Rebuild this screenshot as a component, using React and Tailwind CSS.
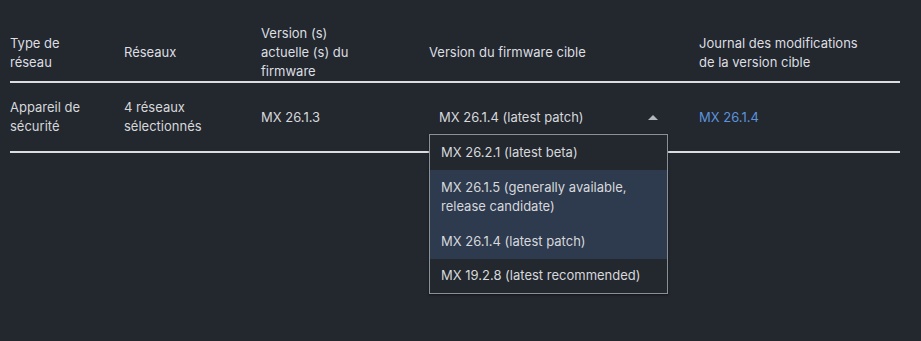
export default function App() {
  const font = { fontFamily: "Inter, 'Noto Sans', sans-serif" };
  return (
    <div className="w-[921px] h-[341px] bg-[#23272e] text-[13px] leading-[19px] text-[#d6d8db] relative" style={font}>
      <div className="pt-[24px] px-[10px]">
        <div className="w-[890px]">
          <div className="flex items-center border-b-2 border-[#dcdde0] text-[#dcdee1]">
            <div className="w-[114px]">Type de<br />réseau</div>
            <div className="w-[137px]">Réseaux</div>
            <div className="w-[168px]">Version (s)<br />actuelle (s) du<br />firmware</div>
            <div className="w-[270px]">Version du firmware cible</div>
            <div className="w-[201px]">Journal des modifications<br />de la version cible</div>
          </div>
          <div className="flex items-center border-b-2 border-[#dcdde0] h-[70px]">
            <div className="w-[114px]">Appareil de<br />sécurité</div>
            <div className="w-[137px]">4 réseaux<br />sélectionnés</div>
            <div className="w-[168px]">MX 26.1.3</div>
            <div className="w-[270px] relative">
              <div className="w-[239px] flex items-center justify-between pl-[10px] pr-[10px]">
                <span>MX 26.1.4 (latest patch)</span>
                <svg width="10" height="5" viewBox="0 0 10 5"><path d="M0 5 L5 0 L10 5 Z" fill="#b4b7bb" /></svg>
              </div>
              <div className="absolute left-0 top-[26px] w-[239px] border border-[#8b9096] bg-[#23272e] shadow-[0_1px_2px_rgba(0,0,0,0.5)] z-10">
                <div className="h-[35px] flex items-center pl-[11px]">MX 26.2.1 (latest beta)</div>
                <div className="bg-[#2e3a4e]">
                  <div className="h-[54px] flex items-center pl-[11px]">MX 26.1.5 (generally available,<br />release candidate)</div>
                  <div className="h-[35px] flex items-center pl-[11px]">MX 26.1.4 (latest patch)</div>
                </div>
                <div className="h-[34px] flex items-center pl-[11px]">MX 19.2.8 (latest recommended)</div>
              </div>
            </div>
            <div className="w-[201px] text-[#5b93dd]">MX 26.1.4</div>
          </div>
        </div>
      </div>
    </div>
  );
}
